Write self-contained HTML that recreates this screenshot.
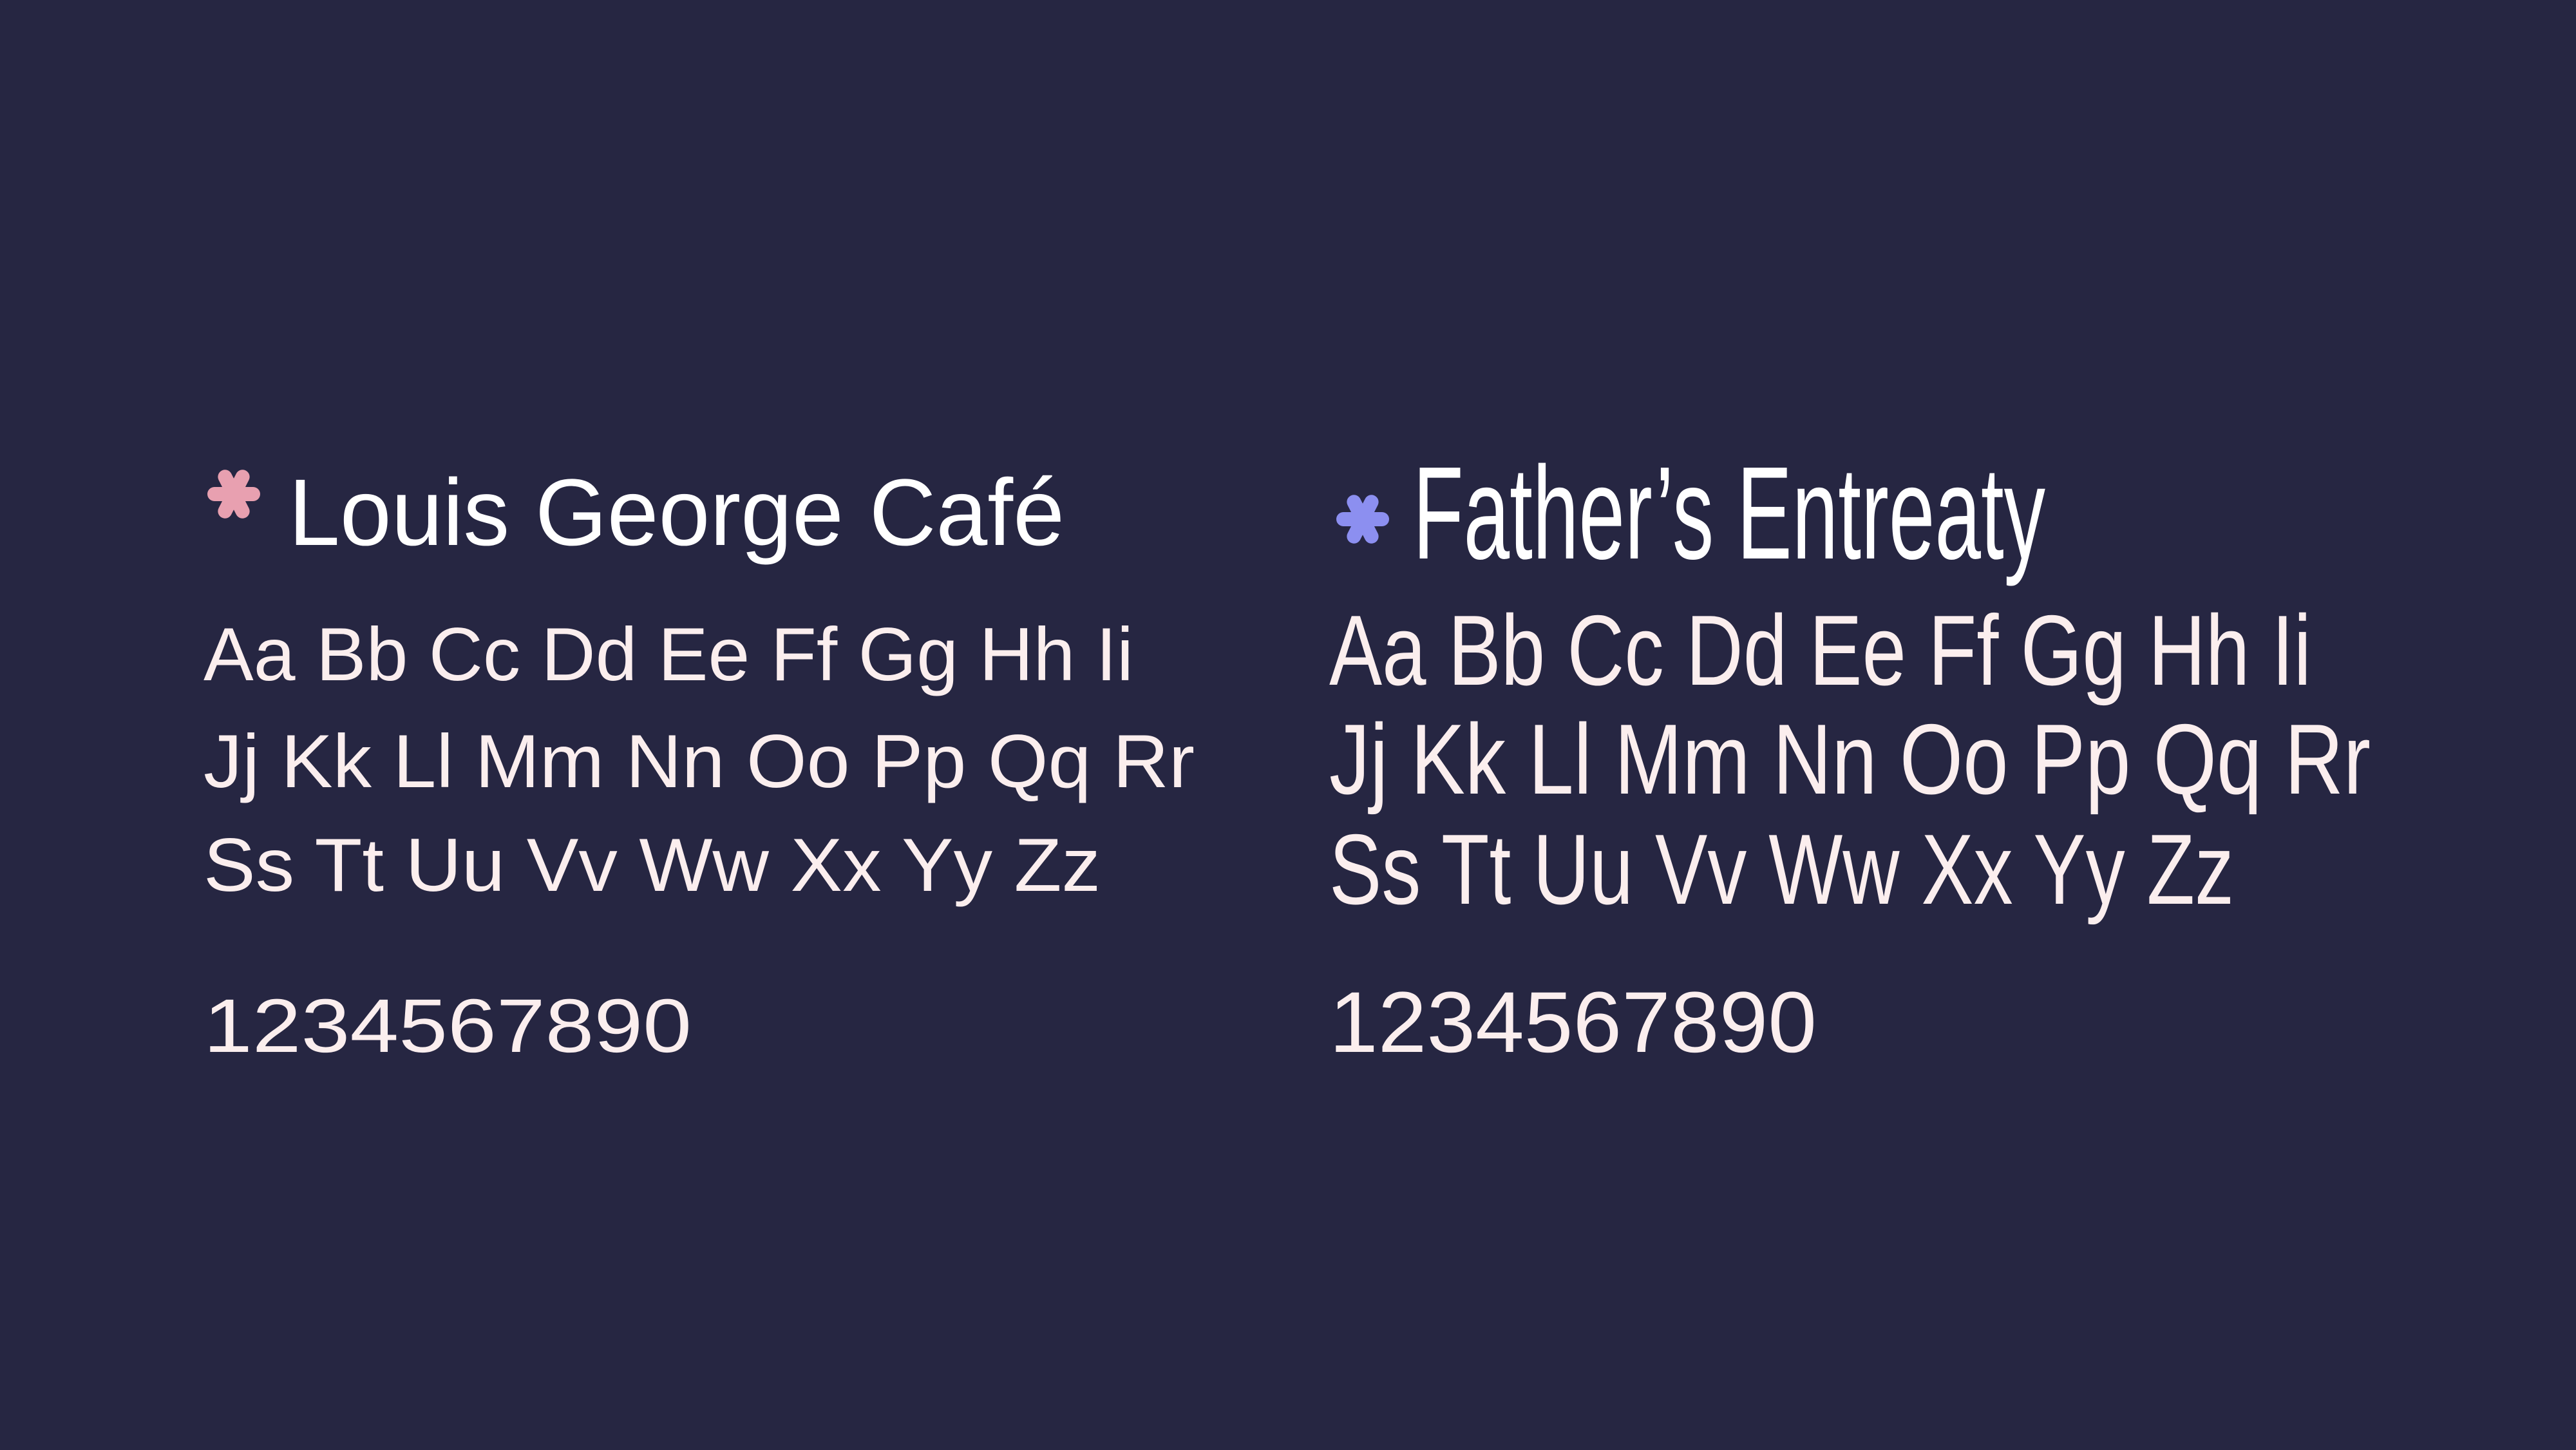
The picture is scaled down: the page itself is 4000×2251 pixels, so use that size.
<!DOCTYPE html>
<html><head><meta charset="utf-8"><style>
html,body{margin:0;padding:0;background:#262642;}
svg{display:block}
text{font-family:"Liberation Sans",sans-serif;}
</style></head><body>
<svg width="4000" height="2251" viewBox="0 0 4000 2251" xmlns="http://www.w3.org/2000/svg">
<rect width="4000" height="2251" fill="#262642"/>
<defs>
<g id="ast">
<line x1="-30" y1="0" x2="30" y2="0" stroke-width="22" stroke-linecap="round"/>
<line x1="-30" y1="0" x2="30" y2="0" stroke-width="22" stroke-linecap="round" transform="rotate(63)"/>
<line x1="-30" y1="0" x2="30" y2="0" stroke-width="22" stroke-linecap="round" transform="rotate(117)"/>
<circle r="18"/>
</g>
</defs>
<use href="#ast" x="363" y="767" stroke="#e8a0b0" fill="#e8a0b0"/>
<use href="#ast" x="2116" y="806" stroke="#8c8ff0" fill="#8c8ff0"/>

<g fill="#ffffff">
<text x="448" y="846" font-size="147" textLength="1205" lengthAdjust="spacingAndGlyphs">Louis George Café</text>
</g>
<g fill="#fbeeee" font-size="117">
<text x="316" y="1056" textLength="1444" lengthAdjust="spacingAndGlyphs">Aa Bb Cc Dd Ee Ff Gg Hh Ii</text>
<text x="316" y="1222" textLength="1539" lengthAdjust="spacingAndGlyphs">Jj Kk Ll Mm Nn Oo Pp Qq Rr</text>
<text x="316" y="1383" textLength="1393" lengthAdjust="spacingAndGlyphs">Ss Tt Uu Vv Ww Xx Yy Zz</text>
<text x="316" y="1633" font-size="118" textLength="758" lengthAdjust="spacingAndGlyphs">1234567890</text>
</g>

<g fill="#fbeeee">
<text x="2194" y="867" font-size="205" fill="#ffffff" textLength="982" lengthAdjust="spacingAndGlyphs">Father’s Entreaty</text>
<text x="2064" y="1063" font-size="155" textLength="1525" lengthAdjust="spacingAndGlyphs">Aa Bb Cc Dd Ee Ff Gg Hh Ii</text>
<text x="2064" y="1232" font-size="155" textLength="1617" lengthAdjust="spacingAndGlyphs">Jj Kk Ll Mm Nn Oo Pp Qq Rr</text>
<text x="2064" y="1403" font-size="155" textLength="1405" lengthAdjust="spacingAndGlyphs">Ss Tt Uu Vv Ww Xx Yy Zz</text>
<text x="2064" y="1633" font-size="134" textLength="757" lengthAdjust="spacingAndGlyphs">1234567890</text>
</g>
</svg>
</body></html>
